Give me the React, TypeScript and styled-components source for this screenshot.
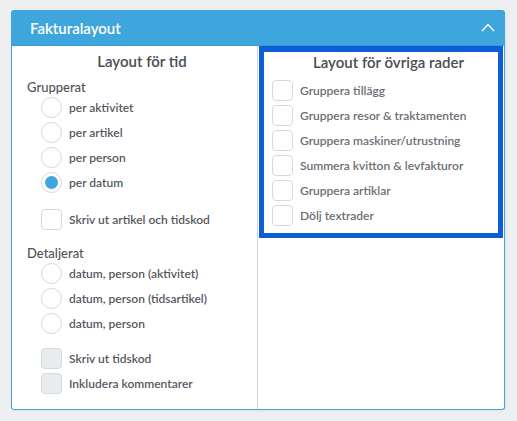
import React from "react";
import styled, { createGlobalStyle } from "styled-components";

const Global = createGlobalStyle`
  html, body { margin: 0; padding: 0; }
  body {
    background: #eeeff1;
    font-family: Lato, "Open Sans", "Liberation Sans", sans-serif;
    -webkit-font-smoothing: antialiased;
  }
`;

const Page = styled.div`
  padding: 10px 12px 0 11px;
  height: 421px;
  box-sizing: border-box;
`;

const Panel = styled.div`
  width: 494px;
  height: 400px;
  box-sizing: border-box;
  display: flex;
  flex-direction: column;
  border-radius: 3px;
  background: #fff;
  box-shadow: 1px 1px 3px rgba(0, 0, 0, 0.06);
`;

const Header = styled.div`
  height: 35px;
  flex: none;
  display: flex;
  align-items: center;
  justify-content: space-between;
  padding: 0 10px 0 19px;
  background: #3fa5dd;
  border-radius: 3px 3px 0 0;
  border-bottom: 1px solid #3a9bd0;
  color: #fff;
  font-size: 15px;
  font-weight: 600;
`;

const Body = styled.div`
  flex: 1;
  display: flex;
  border: 1px solid #3fa5dd;
  border-top: none;
  border-radius: 0 0 3px 3px;
`;

const LeftCol = styled.div`
  width: 246px;
  flex: none;
  box-sizing: border-box;
  padding: 5px 0 0 15px;
  border-right: 1px solid #d4d4d4;
  display: flex;
  flex-direction: column;
`;

const RightCol = styled.div`
  flex: 1;
  padding: 0 1px 0 1px;
`;

const Highlight = styled.div`
  border: 5px solid #0d5dd6;
  border-top-width: 6px;
  padding: 0 0 5px 8px;
  display: flex;
  flex-direction: column;
`;

const Title = styled.div<{ $shift?: number }>`
  font-size: 15px;
  font-weight: 600;
  color: #4a4d52;
  text-align: center;
  line-height: 20px;
  padding-left: ${(p) => p.$shift ?? 0}px;
`;

const GroupLabel = styled.div<{ $mt: number }>`
  margin-top: ${(p) => p.$mt}px;
  font-size: 13px;
  font-weight: 500;
  color: #50535a;
  line-height: 16px;
`;

const List = styled.div<{ $mt?: number; $indent?: number }>`
  margin-top: ${(p) => p.$mt ?? 0}px;
  padding-left: ${(p) => p.$indent ?? 0}px;
  display: flex;
  flex-direction: column;
`;

const Row = styled.label`
  height: 25px;
  display: flex;
  align-items: center;
  gap: 7px;
`;

const Radio = styled.span<{ $checked?: boolean }>`
  width: 21px;
  height: 21px;
  box-sizing: border-box;
  border-radius: 50%;
  border: 1px solid #d3d7dc;
  background: #fff;
  display: flex;
  align-items: center;
  justify-content: center;
  &::after {
    content: "";
    display: ${(p) => (p.$checked ? "block" : "none")};
    width: 13px;
    height: 13px;
    border-radius: 50%;
    background: #3fa5dd;
  }
`;

const Check = styled.span<{ $disabled?: boolean }>`
  width: 21px;
  height: 21px;
  box-sizing: border-box;
  border-radius: 4px;
  border: 1px solid ${(p) => (p.$disabled ? "#d6dade" : "#d5d9de")};
  background: ${(p) => (p.$disabled ? "#e9ecef" : "#fff")};
  flex: none;
`;

const Label = styled.span<{ $light?: boolean }>`
  font-size: 12px;
  font-weight: 600;
  color: ${(p) => (p.$light ? "#6b6e74" : "#55585e")};
  white-space: nowrap;
`;

const Chevron = () => (
  <svg width="14" height="9" viewBox="0 0 14 9" fill="none">
    <path d="M1 8 L7 1.5 L13 8" stroke="#fff" strokeWidth="1.4" />
  </svg>
);

export default function App() {
  const grupperat = ["per aktivitet", "per artikel", "per person", "per datum"];
  const detaljerat = [
    "datum, person (aktivitet)",
    "datum, person (tidsartikel)",
    "datum, person",
  ];
  const ovriga = [
    "Gruppera tillägg",
    "Gruppera resor & traktamenten",
    "Gruppera maskiner/utrustning",
    "Summera kvitton & levfakturor",
    "Gruppera artiklar",
    "Dölj textrader",
  ];
  return (
    <>
      <Global />
      <Page>
        <Panel>
          <Header>
            <span>Fakturalayout</span>
            <Chevron />
          </Header>
          <Body>
            <LeftCol>
              <Title>Layout för tid</Title>
              <GroupLabel $mt={8}>Grupperat</GroupLabel>
              <List $indent={14}>
                {grupperat.map((t) => (
                  <Row key={t}>
                    <Radio $checked={t === "per datum"} />
                    <Label>{t}</Label>
                  </Row>
                ))}
              </List>
              <List $indent={14} $mt={12}>
                <Row>
                  <Check />
                  <Label>Skriv ut artikel och tidskod</Label>
                </Row>
              </List>
              <GroupLabel $mt={13}>Detaljerat</GroupLabel>
              <List $indent={14}>
                {detaljerat.map((t) => (
                  <Row key={t}>
                    <Radio />
                    <Label>{t}</Label>
                  </Row>
                ))}
              </List>
              <List $indent={14} $mt={10}>
                <Row>
                  <Check $disabled />
                  <Label>Skriv ut tidskod</Label>
                </Row>
                <Row>
                  <Check $disabled />
                  <Label>Inkludera kommentarer</Label>
                </Row>
              </List>
            </LeftCol>
            <RightCol>
              <Highlight>
                <Title $shift={7}>Layout för övriga rader</Title>
                <List $mt={6}>
                  {ovriga.map((t) => (
                    <Row key={t}>
                      <Check />
                      <Label $light>{t}</Label>
                    </Row>
                  ))}
                </List>
              </Highlight>
            </RightCol>
          </Body>
        </Panel>
      </Page>
    </>
  );
}
